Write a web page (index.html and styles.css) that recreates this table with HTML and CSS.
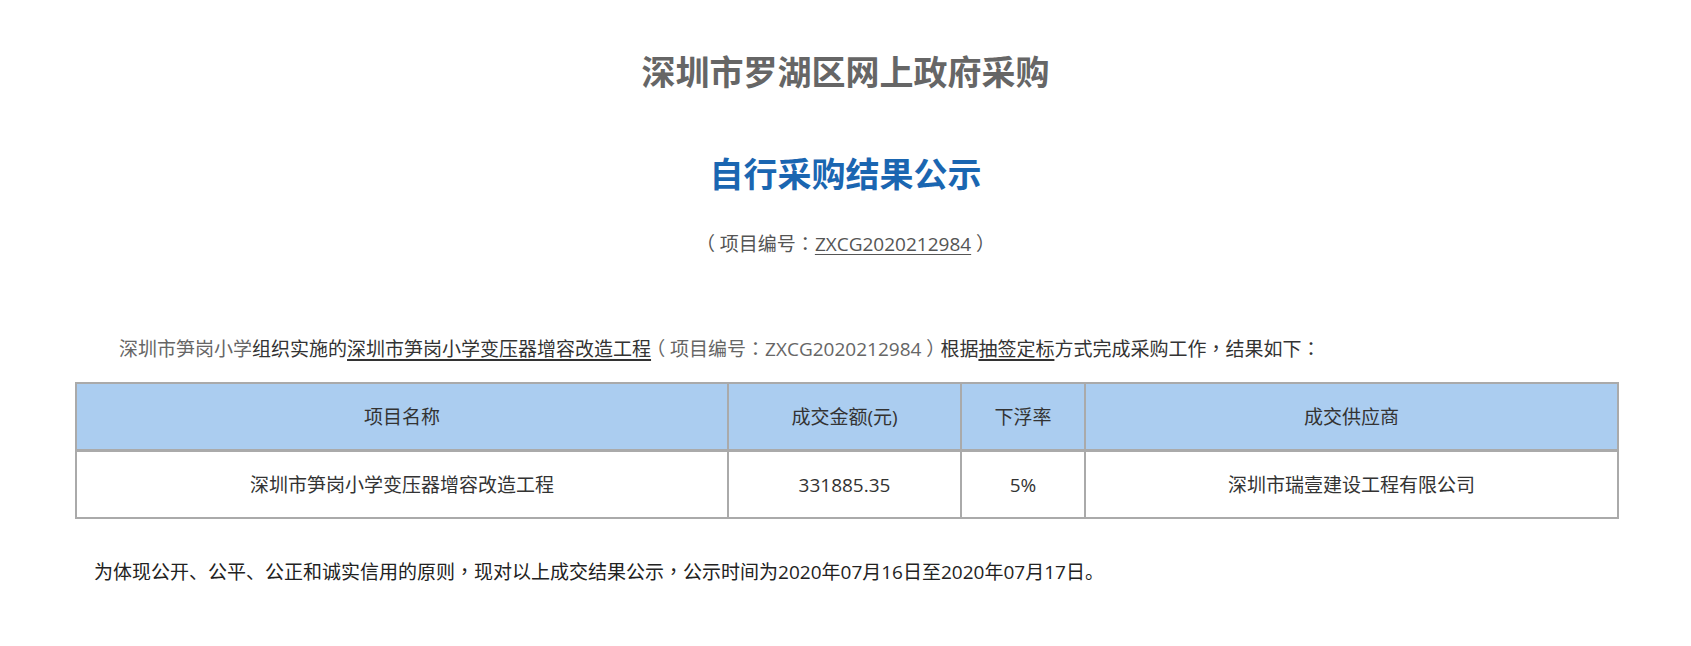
FILE: index.html
```html
<!DOCTYPE html>
<html lang="zh-CN">
<head>
<meta charset="utf-8">
<title>自行采购结果公示</title>
<link rel="stylesheet" href="styles.css">
</head>
<body>
<div class="page">
  <h1 class="site-title">深圳市罗湖区网上政府采购</h1>
  <h2 class="notice-title">自行采购结果公示</h2>
  <p class="project-no"><span class="pc pp" lang="zh-TW">（</span>项目编号<span class="pc" lang="zh-TW">：</span><span class="link-gray">ZXCG2020212984</span><span class="pc pp" lang="zh-TW">）</span></p>
  <p class="intro"><span class="muted">深圳市笋岗小学</span>组织实施的<span class="link">深圳市笋岗小学变压器增容改造工程</span><span class="muted"><span class="pc pp" lang="zh-TW">（</span>项目编号<span class="pc" lang="zh-TW">：</span>ZXCG2020212984<span class="pc pp" lang="zh-TW">）</span></span>根据<span class="link">抽签定标</span>方式完成采购工作<span class="pc" lang="zh-TW">，</span>结果如下<span class="pc" lang="zh-TW">：</span></p>
  <div class="table-wrap">
    <table class="result">
      <colgroup>
        <col class="c1"><col class="c2"><col class="c3"><col class="c4">
      </colgroup>
      <thead>
        <tr><th>项目名称</th><th>成交金额(元)</th><th>下浮率</th><th>成交供应商</th></tr>
      </thead>
      <tbody>
        <tr><td>深圳市笋岗小学变压器增容改造工程</td><td>331885.35</td><td>5%</td><td>深圳市瑞壹建设工程有限公司</td></tr>
      </tbody>
    </table>
  </div>
  <p class="closing">为体现公开、公平、公正和诚实信用的原则<span class="pc" lang="zh-TW">，</span>现对以上成交结果公示<span class="pc" lang="zh-TW">，</span>公示时间为2020年07月16日至2020年07月17日。</p>
</div>
</body>
</html>
```
FILE: styles.css
```css
html, body {
  margin: 0;
  padding: 0;
  background: #ffffff;
}
body {
  font-family: "Open Sans", "Noto Sans CJK SC", sans-serif;
  font-size: 19px;
  color: #333;
}
.page {
  padding: 51px 0 40px;
}
.site-title {
  margin: 0;
  font-family: "Noto Sans CJK SC", sans-serif;
  font-size: 34px;
  line-height: 40px;
  font-weight: 700;
  color: #666;
  text-align: center;
}
.notice-title {
  margin: 62px 0 0;
  font-family: "Noto Sans CJK SC", sans-serif;
  font-size: 34px;
  line-height: 40px;
  font-weight: 700;
  color: #1a66b1;
  text-align: center;
}
.pc {
  font-family: "Noto Sans CJK TC", sans-serif;
}
.pp {
  font-feature-settings: "halt" 1;
  padding: 0 0.25em;
}
.project-no {
  margin: 38px 0 0;
  line-height: 24px;
  color: #555;
  text-align: center;
}
.link-gray {
  text-decoration: underline;
  text-underline-offset: 3px;
  color: #555;
}
.intro {
  margin: 80px 0 0;
  padding-left: 119px;
  line-height: 24px;
  color: #333;
}
.muted {
  color: #666;
}
.link {
  color: #333;
  text-decoration: underline;
  text-decoration-thickness: 2px;
  text-underline-offset: 3px;
}
.table-wrap {
  margin-top: 21px;
  padding: 0 74px 0 75px;
}
.result {
  width: 100%;
  border-collapse: collapse;
  table-layout: fixed;
  border: 2px solid #aaa;
}
.c1 { width: 652px; }
.c2 { width: 233px; }
.c3 { width: 124px; }
.c4 { width: 533px; }
.result th,
.result td {
  border: 2px solid #aaa;
  height: 65px;
  padding: 0;
  text-align: center;
  vertical-align: middle;
  font-weight: 400;
  color: #333;
  line-height: 24px;
}
.result th {
  background: #abcdf0;
  border-bottom-width: 3px;
}
.closing {
  margin: 40px 0 0;
  padding-left: 94px;
  line-height: 24px;
  color: #222;
}
```
